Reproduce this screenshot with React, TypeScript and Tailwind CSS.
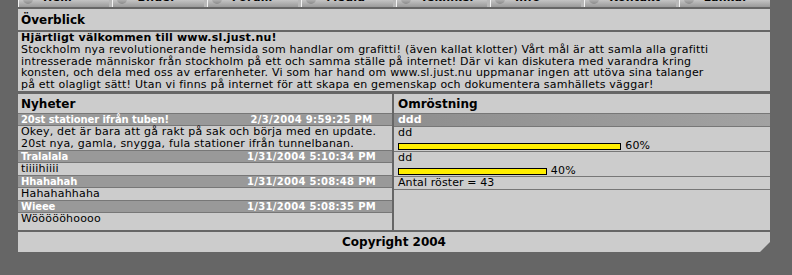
import React from 'react'

const navItems = ['Hem', 'Bilder', 'Forum', 'Media', 'Tekniker', 'Info', 'Kontakt', 'Länkar']

const intro = [
  'Stockholm nya revolutionerande hemsida som handlar om grafitti! (även kallat klotter) Vårt mål är att samla alla grafitti',
  'intresserade människor från stockholm på ett och samma ställe på internet! Där vi kan diskutera med varandra kring',
  'konsten, och dela med oss av erfarenheter. Vi som har hand om www.sl.just.nu uppmanar ingen att utöva sina talanger',
  'på ett olagligt sätt! Utan vi finns på internet för att skapa en gemenskap och dokumentera samhällets väggar!',
]

const news = [
  {
    title: '20st stationer ifrån tuben!',
    date: '2/3/2004 9:59:25 PM',
    body: ['Okey, det är bara att gå rakt på sak och börja med en update.', '20st nya, gamla, snygga, fula stationer ifrån tunnelbanan.'],
  },
  { title: 'Tralalala', date: '1/31/2004 5:10:34 PM', body: ['tiiiihiiii'] },
  { title: 'Hhahahah', date: '1/31/2004 5:08:48 PM', body: ['Hahahahhaha'] },
  { title: 'Wieee', date: '1/31/2004 5:08:35 PM', body: ['Wöööööhoooo'] },
]

const poll = [
  { label: 'dd', pct: 60 },
  { label: 'dd', pct: 40 },
]

function NavBar() {
  return (
    <div className="flex h-[7px] items-end overflow-hidden gap-[3px] bg-[#b8b8b8]">
      {navItems.map(item => (
        <div
          key={item}
          className="flex h-[22px] w-[91px] shrink-0 grow items-end gap-[10px] border-l border-[#f4f4f4] bg-gradient-to-b from-[#f6f6f6] via-[#dcdcdc] to-[#9a9a9a] pb-[4px] pl-[4px] text-[11px] font-bold leading-[11px] tracking-[0.3px] text-black"
        >
          <span className="mb-[-1px] h-[10px] w-[10px] rounded-full bg-gradient-to-b from-[#e8e8e8] to-[#8a8a8a]" />
          <span>{item}</span>
        </div>
      ))}
    </div>
  )
}

export default function App() {
  return (
    <div className="h-[275px] w-[792px] overflow-hidden bg-[#666666] font-['DejaVu_Sans',sans-serif] text-black">
      <div className="ml-[18px] w-[752px]">
        <NavBar />

        <div className="mt-[2px] flex h-[21px] items-center bg-[#cccccc] px-[3px] text-[12px] font-bold">
          Överblick
        </div>
        <div className="mt-[2px] h-[59px] whitespace-nowrap bg-[#cccccc] px-[3px] text-[11px] leading-[11.8px] tracking-[0.2px]">
          <div className="font-bold">Hjärtligt välkommen till www.sl.just.nu!</div>
          {intro.map((l, i) => (
            <div key={i}>{l}</div>
          ))}
        </div>

        <div className="mt-[3px] flex h-[136px] gap-[2px]">
          {/* Nyheter */}
          <div className="flex w-[374px] flex-col bg-[#cccccc]">
            <div className="flex h-[20px] items-center border-b border-[#777777] px-[3px] text-[12px] font-bold">Nyheter</div>
            {news.map((n, i) => (
              <div key={i} className="flex flex-col">
                <div className="flex h-[12px] items-center border-b border-[#777777] bg-[#999999] pl-[3px] text-[10px] font-bold text-white">
                  <span className="flex-1 tracking-[-0.1px]">{n.title}</span>
                  <span className="w-[159px] pr-[2px] text-center tracking-[0.3px]">{n.date}</span>
                </div>
                <div className={'whitespace-nowrap px-[3px] text-[11px] leading-[12px] tracking-[0.2px] ' + (i < news.length - 1 ? 'border-b border-[#777777]' : '')}>
                  {n.body.map((b, j) => (
                    <div key={j}>{b}</div>
                  ))}
                </div>
              </div>
            ))}
          </div>

          {/* Omröstning */}
          <div className="flex flex-1 flex-col bg-[#cccccc]">
            <div className="flex h-[20px] items-center border-b border-[#777777] px-[4px] text-[12px] font-bold">Omröstning</div>
            <div className="flex h-[13px] items-center border-b border-[#777777] bg-gradient-to-r from-[#8e8e8e] to-[#a2a2a2] px-[4px] text-[11px] font-bold text-white">
              ddd
            </div>
            {poll.map((p, i) => (
              <div key={i} className="h-[25px] border-b border-[#777777] px-[4px] text-[11px] leading-[12px] tracking-[0.2px]">
                <div>{p.label}</div>
                <div className="mt-[1px] flex items-center gap-[4px]">
                  <div className="h-[7px] border border-black bg-[#ffee00]" style={{ width: `${p.pct * 3.72}px` }} />
                  <span>{p.pct}%</span>
                </div>
              </div>
            ))}
            <div className="flex h-[13px] items-center border-b border-[#777777] px-[4px] text-[11px] tracking-[0.1px]">Antal röster = 43</div>
          </div>
        </div>

        <div className="mt-[2px] flex h-[20px] items-center justify-center bg-[#cccccc] text-[12px] font-bold [clip-path:polygon(0_0,100%_0,100%_calc(100%-10px),calc(100%-10px)_100%,0_100%)]">
          Copyright 2004
        </div>
      </div>
    </div>
  )
}
